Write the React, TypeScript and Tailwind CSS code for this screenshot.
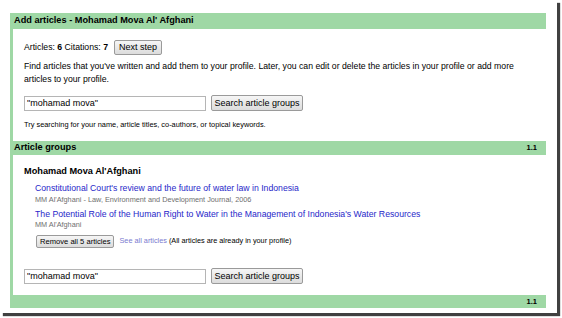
import React from 'react';

const green = 'bg-[#9fd8a5]';

export default function App() {
  return (
    <div className="w-[562px] h-[318px] bg-white font-['Liberation_Sans',Arial,sans-serif] text-black">
      <div className="w-[557px] h-[313px] bg-white shadow-[3px_3px_1px_rgba(0,0,0,0.75)] pt-[13px] pl-[10px]">
        <div className="w-[536px]">
          {/* Header */}
          <div className={`${green} h-[16px] px-[4px] flex items-center text-[9.2px] font-bold`}>
            Add articles - Mohamad Mova Al' Afghani
          </div>

          {/* Search panel */}
          <div className="border-l-[3px] border-[#9fd8a5] pl-[11px] pt-[11px] pb-[11px]">
            <div className="flex items-center h-[15px] text-[8.7px]">
              <span>
                Articles: <b>6</b> Citations: <b>7</b>
              </span>
              <button className="ml-[6px] h-[15px] px-[4px] border border-[#9a9a9a] rounded-[2px] bg-gradient-to-b from-[#f6f6f6] to-[#dcdcdc] text-[9px] leading-none">
                Next step
              </button>
            </div>
            <p className="mt-[5px] text-[8.7px] leading-[13px] w-[500px]">
              Find articles that you've written and add them to your profile. Later, you can edit or delete the articles in your profile or add more articles to your profile.
            </p>
            <SearchRow className="mt-[9px]" />
            <p className="mt-[9px] text-[7.4px] leading-[10px]">
              Try searching for your name, article titles, co-authors, or topical keywords.
            </p>
          </div>

          {/* Article groups bar */}
          <div className={`${green} h-[14px] pl-[4px] pr-[9px] flex items-center justify-between`}>
            <span className="text-[9.2px] font-bold">Article groups</span>
            <span className="text-[7.5px] font-bold">1.1</span>
          </div>

          {/* Groups */}
          <div className="border-l-[3px] border-[#9fd8a5] pl-[11px] pt-[10px] pb-[11px]">
            <div className="text-[9.2px] font-bold leading-[12px]">Mohamad Mova Al'Afghani</div>
            <div className="pl-[11px]">
              <div className="mt-[5px] text-[8.7px] leading-[12px] text-[#2727c9]">
                Constitutional Court's review and the future of water law in Indonesia
              </div>
              <div className="mt-[1px] text-[7.3px] leading-[10px] text-[#6f6f6f]">
                MM Al'Afghani - Law, Environment and Development Journal, 2006
              </div>
              <div className="mt-[3px] text-[8.7px] leading-[12px] text-[#2727c9]">
                The Potential Role of the Human Right to Water in the Management of Indonesia's Water Resources
              </div>
              <div className="text-[7.3px] leading-[10px] text-[#6f6f6f]">MM Al'Afghani</div>
              <div className="mt-[5px] flex items-center h-[13px] text-[7.3px]">
                <button className="ml-[1px] h-[13px] px-[3px] border border-[#9a9a9a] rounded-[2px] bg-gradient-to-b from-[#f6f6f6] to-[#dcdcdc] text-[7.6px] leading-none">
                  Remove all 5 articles
                </button>
                <span className="ml-[5px] text-[#7b7bd0]">See all articles</span>
                <span className="ml-[2px]">(All articles are already in your profile)</span>
              </div>
            </div>
            <SearchRow className="mt-[20px]" />
          </div>

          {/* Footer bar */}
          <div className={`${green} h-[13px] pr-[9px] flex items-center justify-end`}>
            <span className="text-[7.5px] font-bold">1.1</span>
          </div>
        </div>
      </div>
    </div>
  );
}

function SearchRow({ className }: { className: string }) {
  return (
    <div className={`flex items-center h-[16px] ${className}`}>
      <input
        readOnly
        value={'"mohamad mova"'}
        className="w-[182px] h-[15px] border border-[#b5b5b5] px-[2px] text-[9px] outline-none"
      />
      <button className="ml-[5px] w-[92px] h-[16px] border border-[#9a9a9a] rounded-[2px] bg-gradient-to-b from-[#f6f6f6] to-[#dcdcdc] text-[9px] leading-none">
        Search article groups
      </button>
    </div>
  );
}
